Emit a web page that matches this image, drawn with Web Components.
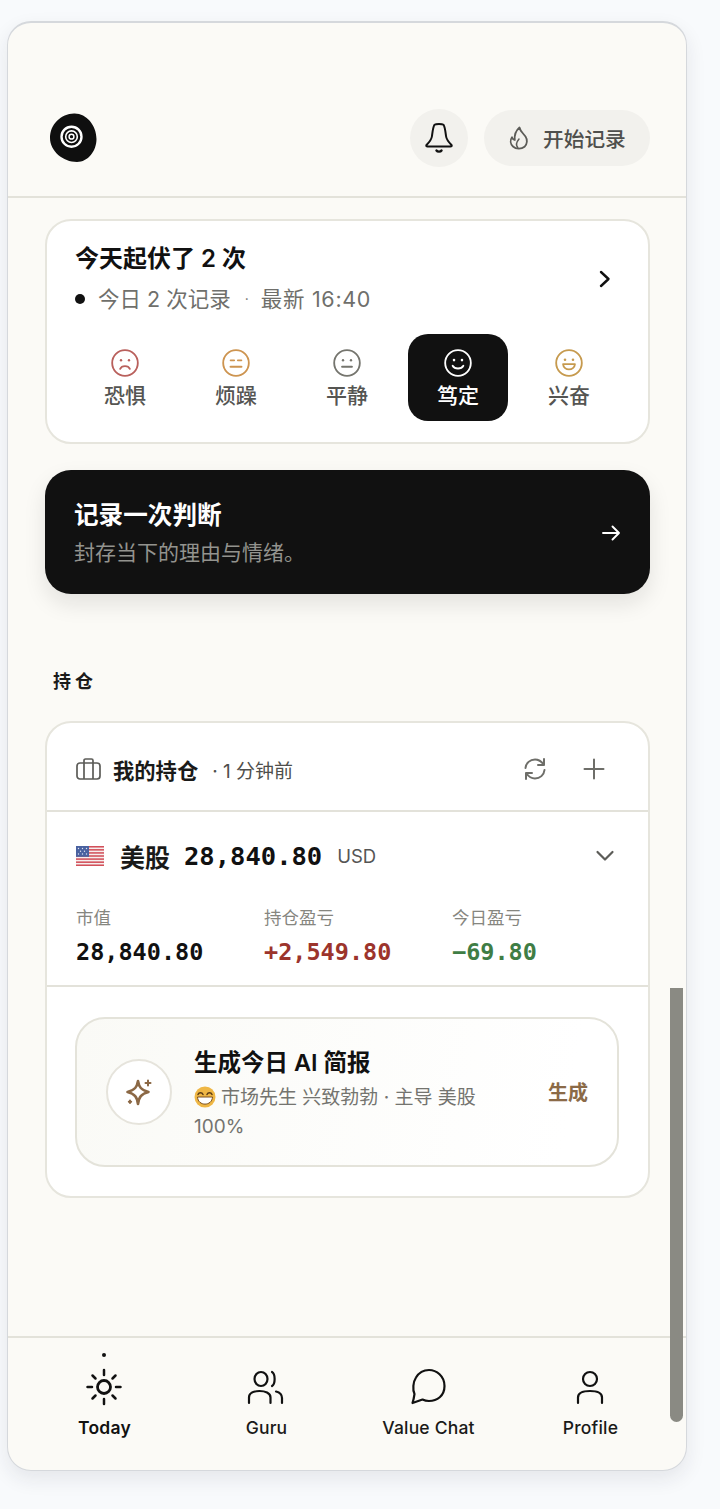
<!DOCTYPE html>
<html lang="zh"><head><meta charset="utf-8"><title>Today</title>
<style>
html,body{margin:0;padding:0;background:#f8fafc}
body{font-family:Inter,"Noto Sans CJK SC",sans-serif;color:#111;width:720px;height:1509px;overflow:hidden}
</style></head><body>
<app-frame>
  <top-bar slot="top"></top-bar>
  <mood-card></mood-card>
  <action-card></action-card>
  <section-label>持仓</section-label>
  <holdings-card></holdings-card>
  <bottom-nav slot="nav"></bottom-nav>
</app-frame>
<script>
const FONT='font-family:Inter,"Noto Sans CJK SC",sans-serif;';
const MONO='font-family:"DejaVu Sans Mono","Noto Sans CJK SC",monospace;';
function def(name,html,setup){
  customElements.define(name,class extends HTMLElement{
    constructor(){super();const r=this.attachShadow({mode:'open'});r.innerHTML=typeof html==='function'?html(this):html;}
    connectedCallback(){if(setup)setup(this);}
  });
}
def('app-frame',`<style>
:host{display:block;position:relative;margin:21px 0 0 7px;width:680px;height:1450px;box-sizing:border-box;border:1px solid #d5d8dc;border-top-width:2px;border-radius:24px;background:#fbfaf6;box-shadow:0 8px 20px rgba(30,35,60,.09);overflow:hidden}
.wrap{display:flex;flex-direction:column;height:100%}
main{flex:1;display:flex;flex-direction:column;padding:21px 36px 0 37px;min-height:0}
.bar{position:absolute;left:662px;top:965px;width:13px;height:434px;background:#8a8a83;border-radius:0 0 7px 7px}
</style><div class="wrap"><slot name="top"></slot><main><slot></slot></main><slot name="nav"></slot></div><div class="bar"></div>`);
def('top-bar',`<style>
:host{display:flex;align-items:flex-end;height:175px;box-sizing:border-box;border-bottom:2px solid #e3e2da;padding:0 36px 29px 42px;${FONT}}
.logo{width:48px;height:50px;margin-bottom:4px;display:block}
.sp{flex:1}
.bell{width:58px;height:58px;border-radius:50%;background:#f2f1ed;display:flex;align-items:center;justify-content:center;margin-right:16px}
.pill{width:166px;height:56px;box-sizing:border-box;border-radius:28px;background:#f2f1ed;display:flex;align-items:center;padding-left:25px;gap:14px;font-size:20.700px;font-weight:500;color:#4f4f4c;margin-bottom:1px}
svg{display:block}
</style>
<svg class="logo" viewBox="0 0 48 50"><path d="M24 .5C36 0 46.500 12 46.500 26C46.500 38 38 49 27 49C13 49 0 38 0 25C0 11 11 1 24 .5Z" fill="#0f0f0f"/><g fill="none" stroke="#fff"><circle cx="21.500" cy="23.700" r="10" stroke-width="2.400"/><circle cx="21.500" cy="23.700" r="5.800" stroke-width="1.600"/><circle cx="21.500" cy="23.700" r="2.400" stroke-width="1.500"/></g></svg>
<div class="sp"></div>
<div class="bell"><svg width="28" height="32" viewBox="0 0 28 32" fill="none" stroke="#111" stroke-width="2" stroke-linecap="round" stroke-linejoin="round"><path d="M9.500 2.800C11 1.700 17 1.700 18.500 2.800C20 5 20.500 10 21 14C21.500 18 24 20.500 26.500 23C27 24 26.500 24.500 25.500 24.500H2.500C1.500 24.500 1 24 1.500 23C4 20.500 6.500 18 7 14C7.500 10 8 5 9.500 2.800Z"/><path d="M11.500 28.500C12.500 30 15.500 30 16.500 28.500" stroke-width="2.400"/></svg></div>
<div class="pill"><svg width="20" height="24" viewBox="0 0 20 24" fill="none" stroke="#5c5c58" stroke-width="1.800" stroke-linejoin="round" stroke-linecap="round"><path d="M10.500 1.500C11 5 14 7 16.500 10.500C18.500 13.500 18.500 18 15.500 20.800C12.500 23.300 7 23.300 4 20.500C1.200 17.800 1 14 3 11.200C3.500 12.800 4.500 13.600 5.800 14C5.300 9.500 7 4.500 10.500 1.500Z"/><path d="M8.800 21.500C6.500 19 7.500 16 10 13" stroke-width="1.500"/></svg><span>开始记录</span></div>`);
const face={
 red:['#b9605c','<circle cx="9.300" cy="10.500" r="1.100" fill="C"/><circle cx="16.700" cy="10.500" r="1.100" fill="C"/><path d="M8.500 18.500C10 15 16 15 17.500 18.500"/>'],
 amber:['#cd9450','<path d="M8 10.500H11.300M14.700 10.500H18" stroke-width="1.700"/><path d="M8 16.500H18" stroke-width="2"/>'],
 gray:['#75756e','<circle cx="9.300" cy="10.500" r="1.100" fill="C"/><circle cx="16.700" cy="10.500" r="1.100" fill="C"/><path d="M8.500 16.500H17.500" stroke-width="2"/>'],
 white:['#fff','<circle cx="9.300" cy="10.300" r="1.200" fill="C"/><circle cx="16.700" cy="10.300" r="1.200" fill="C"/><path d="M8 15.500C10 19 16 19 18 15.500"/>'],
 gold:['#c69a4e','<circle cx="9.300" cy="10" r="1.200" fill="C"/><circle cx="16.700" cy="10" r="1.200" fill="C"/><path d="M7.500 14H18.500C18 20.500 8 20.500 7.500 14Z" stroke-linejoin="round"/>']
};
def('mood-item',h=>{
 const [c,inner]=face[h.getAttribute('face')];
 return `<style>
:host{display:flex;flex-direction:column;align-items:center;box-sizing:border-box;height:87px;padding-top:15px;border-radius:20px;color:#555552;font-size:21px;font-weight:500;${FONT}}
:host([on]){background:#111;color:#fff}
svg{display:block;margin-bottom:4px}
span{line-height:30px}
</style><svg width="28" height="28" viewBox="0 0 26 26" fill="none" stroke="${c}" stroke-width="1.700" stroke-linecap="round"><circle cx="13" cy="13" r="11.900"/>${inner.replace(/"C"/g,'"'+c+'" stroke="none"')}</svg><span><slot></slot></span>`;
});
def('mood-card',`<style>
:host{display:block;height:225px;box-sizing:border-box;border:2px solid #e6e5dd;border-radius:26px;background:#fff;padding:0 29px 0 28px;${FONT}}
.head{position:relative;height:113px}
h2{margin:0;padding-top:21px;font-size:24px;line-height:34px;font-weight:600;color:#111}
.sub{display:flex;align-items:center;font-size:21.500px;line-height:30px;color:#6f6f6b;margin-top:8px}
.dot{width:10px;height:10px;border-radius:50%;background:#111;margin-right:13px}
.m{margin:0 12px 0 14px;font-size:14px}
.t{letter-spacing:.7px}
.chev{position:absolute;right:7px;top:48px}
.row{display:grid;grid-template-columns:repeat(5,100px);gap:11px}
</style><div class="head"><h2>今天起伏了 2 次</h2><div class="sub"><i class="dot"></i><span>今日 2 次记录</span><span class="m">·</span><span class="t">最新 16:40</span></div>
<svg class="chev" width="14" height="20" viewBox="0 0 14 20" fill="none" stroke="#111" stroke-width="2.400" stroke-linecap="round" stroke-linejoin="round"><path d="M3 3L10.500 10L3 17"/></svg></div>
<div class="row"><mood-item face="red">恐惧</mood-item><mood-item face="amber">烦躁</mood-item><mood-item face="gray">平静</mood-item><mood-item face="white" on>笃定</mood-item><mood-item face="gold">兴奋</mood-item></div>`);
def('action-card',`<style>
:host{display:flex;align-items:center;justify-content:space-between;height:124px;box-sizing:border-box;margin-top:26px;padding:1px 29px 0 29px;border-radius:26px;background:#111;box-shadow:0 10px 22px rgba(20,20,20,.1);${FONT}}
b{display:block;font-size:24.600px;line-height:34px;font-weight:600;color:#fff}
span{display:block;font-size:21px;line-height:30px;color:#93938e;margin-top:6px}
svg{display:block}
</style><div><b>记录一次判断</b><span>封存当下的理由与情绪。</span></div>
<svg width="20" height="18" viewBox="0 0 20 18" fill="none" stroke="#fff" stroke-width="1.900" stroke-linecap="round" stroke-linejoin="round"><path d="M2 9H18M11.500 2.500L18 9L11.500 15.500"/></svg>`);
def('section-label',`<style>
:host{display:block;margin:73px 0 0 8px;height:54px;font-size:18px;line-height:30px;font-weight:600;letter-spacing:4px;color:#1b1b1a;${FONT}}
</style><slot></slot>`);
def('stat-cell',h=>`<style>
:host{display:block;${FONT}}
.l{display:block;font-size:17.500px;line-height:26px;color:#86867f}
.v{display:block;margin-top:6px;font-size:23.500px;line-height:30px;font-weight:700;color:${h.getAttribute('color')||'#111'};${MONO}}
</style><span class="l">${h.getAttribute('label')}</span><span class="v">${h.getAttribute('value')}</span>`);
def('ai-brief',`<style>
:host{display:flex;align-items:center;height:150px;box-sizing:border-box;border:2px solid #e4e3da;border-radius:30px;background:linear-gradient(100deg,#fafaf6,#fff 90%);padding:0 29px;${FONT}}
.ic{flex:none;width:66px;height:66px;box-sizing:border-box;border:2px solid #e6e4dc;border-radius:50%;background:#fff;display:flex;align-items:center;justify-content:center;margin-right:22px}
.t{flex:1;min-width:0;padding-top:3px}
b{display:block;font-size:23.500px;line-height:32px;font-weight:600;color:#111}
p{margin:4px 0 0;width:300px;font-size:19px;line-height:29px;color:#74746f}
p svg{vertical-align:-4px;margin-right:5px}
.go{font-size:20px;font-weight:600;color:#8b6a47;margin:-2px 0 0 0}
</style><div class="ic"><svg width="30" height="30" viewBox="0 0 30 30" fill="none" stroke="#8b6845" stroke-width="2.600" stroke-linejoin="round" stroke-linecap="round"><path d="M14 4C15 10 17 13 24.500 15C17 17 15 20 14 27C13 20 11 17 3.500 15C11 13 13 10 14 4Z"/><path d="M24 3.500V8.500M21.500 6H26.500" stroke-width="2"/><path d="M6 23.500V26M4.800 24.800H7.200" stroke-width="2"/></svg></div>
<div class="t"><b>生成今日 AI 简报</b><p><svg width="22" height="22" viewBox="0 0 22 22"><circle cx="11" cy="11" r="10.500" fill="#efb745"/><path d="M4 8.500C5 6 8 6 9 8.500M13 8.500C14 6 17 6 18 8.500" fill="none" stroke="#5b3c16" stroke-width="1.500" stroke-linecap="round"/><path d="M3.500 11H18.500C18 20.500 4 20.500 3.500 11Z" fill="#fff" stroke="#7a4e1c" stroke-width="1"/></svg>市场先生 兴致勃勃 · 主导 美股 100%</p></div>
<div class="go">生成</div>`);
def('holdings-card',`<style>
:host{display:block;height:477px;box-sizing:border-box;border:2px solid #e6e5dd;border-radius:26px;background:#fff;${FONT}}
.r1{display:flex;align-items:center;padding:5px 43px 0 29px;box-sizing:border-box;border-bottom:2px solid #e3e2da;height:89px}
.r1 b{font-size:21.300px;font-weight:600;margin:0 14px 0 12px;color:#1a1a19}
.r1 span{flex:1;font-size:19px;color:#4f4f4c}
.r2{height:175px;box-sizing:border-box;border-bottom:2px solid #e3e2da;padding:0 33px 0 29px}
.mk{display:flex;align-items:center;height:88px}
.mk b{font-size:25px;font-weight:600;margin:0 14px 0 16px;color:#1a1a19}
.mk .n{font-size:25.500px;font-weight:700;color:#111;${MONO}}
.mk .u{flex:1;font-size:18.500px;color:#555;margin-left:15px}
.st{display:grid;grid-template-columns:188px 188px 1fr;margin-top:5px}
.r3{padding:30px 29px 0 28px}
svg{display:block;flex:none}
.ref{margin-right:36px}
</style>
<div class="r1"><svg width="25" height="22" viewBox="0 0 25 22" fill="none" stroke="#5c5c58" stroke-width="1.700" stroke-linejoin="round"><rect x="1" y="5" width="23" height="16" rx="3"/><path d="M8 5V2.500C8 1.600 8.700 1 9.500 1H15.500C16.300 1 17 1.600 17 2.500V5M8 5V21M17 5V21"/></svg><b>我的持仓</b><span>· 1 分钟前</span>
<svg class="ref" width="24" height="24" viewBox="0 0 24 24" fill="none" stroke="#6e6e69" stroke-width="2" stroke-linecap="round" stroke-linejoin="round"><path d="M2.500 11C3 6 7 2.500 12 2.500C15.500 2.500 18.500 4.500 20.500 7.500"/><path d="M21 2V8H15"/><path d="M21.500 13C21 18 17 21.500 12 21.500C8.500 21.500 5.500 19.500 3.500 16.500"/><path d="M3 22V16H9"/></svg>
<svg width="22" height="22" viewBox="0 0 22 22" fill="none" stroke="#6e6e69" stroke-width="2" stroke-linecap="round"><path d="M11 1.500V20.500M1.500 11H20.500"/></svg></div>
<div class="r2"><div class="mk"><svg width="28" height="20" viewBox="0 0 28 20"><rect width="28" height="20" rx="1.500" fill="#f6eeee"/><g fill="#d2505a"><rect y="0" width="28" height="1.540"/><rect y="3.080" width="28" height="1.540"/><rect y="6.160" width="28" height="1.540"/><rect y="9.240" width="28" height="1.540"/><rect y="12.320" width="28" height="1.540"/><rect y="15.400" width="28" height="1.540"/><rect y="18.460" width="28" height="1.540"/></g><rect width="13" height="10.800" fill="#4a62a0"/><g fill="#dfe4f2"><circle cx="2.500" cy="2.500" r=".7"/><circle cx="6.500" cy="2.500" r=".7"/><circle cx="10.500" cy="2.500" r=".7"/><circle cx="4.500" cy="5.300" r=".7"/><circle cx="8.500" cy="5.300" r=".7"/><circle cx="2.500" cy="8" r=".7"/><circle cx="6.500" cy="8" r=".7"/><circle cx="10.500" cy="8" r=".7"/></g></svg><b>美股</b><span class="n">28,840.80</span><span class="u">USD</span>
<svg width="20" height="14" viewBox="0 0 20 14" fill="none" stroke="#5c5c58" stroke-width="2.200" stroke-linecap="round" stroke-linejoin="round"><path d="M2.500 3L10 10.500L17.500 3"/></svg></div>
<div class="st"><stat-cell label="市值" value="28,840.80"></stat-cell><stat-cell label="持仓盈亏" value="+2,549.80" color="#9c342c"></stat-cell><stat-cell label="今日盈亏" value="−69.80" color="#3f7d45"></stat-cell></div></div>
<div class="r3"><ai-brief></ai-brief></div>`);
def('nav-item',h=>`<style>
:host{flex:1;display:flex;flex-direction:column;align-items:center;position:relative;padding-top:29px;font-size:17.500px;font-weight:450;letter-spacing:.2px;color:#1a1a19;${FONT}}
:host([on]){font-weight:600;color:#111}
:host([on])::before{content:"";position:absolute;left:50%;top:15px;width:4px;height:4px;margin-left:-2px;border-radius:50%;background:#111}
svg{display:block;width:40px;height:40px;margin-bottom:9px}
span{line-height:24px;margin-left:1px}
</style><svg viewBox="0 0 40 40" fill="none" stroke="#111" stroke-width="2.200" stroke-linecap="round" stroke-linejoin="round">${{
 sun:'<circle cx="20" cy="20" r="6.500" stroke-width="2.800"/><path d="M20 3V8M20 32V37M3.500 20H8M32 20H36.500M8.500 8.500L11.500 11.500M28.500 28.500L31.500 31.500M8.500 31.500L11.500 28.500M28.500 11.500L31.500 8.500" stroke-width="2.500"/>',
 guru:'<ellipse cx="15" cy="12" rx="6.500" ry="7"/><path d="M26 5C29.500 7 29.500 17 26 19"/><path d="M3 36V30.500C3 26 8 24 13.500 24C19 24 24.500 26 24.500 30.500V36"/><path d="M30 24.500C34 25.500 36 27.500 36 31V36"/>',
 chat:'<path d="M21 3C28.500 3 36.500 9 36.500 19C36.500 29 29 34 21 34C18 34 16.500 33.500 14.500 32.500L4.500 36C5.500 33 6 30.500 6.500 27C4.500 23 5 15 8 10.500C11 5.500 15.500 3 21 3Z"/>',
 user:'<ellipse cx="20" cy="12" rx="7" ry="7"/><path d="M8 36V30.500C8 26 13 24 20 24C27 24 32 26 32 30.500V36"/>'
}[h.getAttribute('icon')]}</svg><span><slot></slot></span>`);
def('bottom-nav',`<style>
:host{display:flex;height:134px;box-sizing:border-box;border-top:2px solid #e3e2da;padding:0 15px 0 15px}
</style><nav-item icon="sun" on>Today</nav-item><nav-item icon="guru">Guru</nav-item><nav-item icon="chat">Value Chat</nav-item><nav-item icon="user">Profile</nav-item>`);
</script>
</body></html>
